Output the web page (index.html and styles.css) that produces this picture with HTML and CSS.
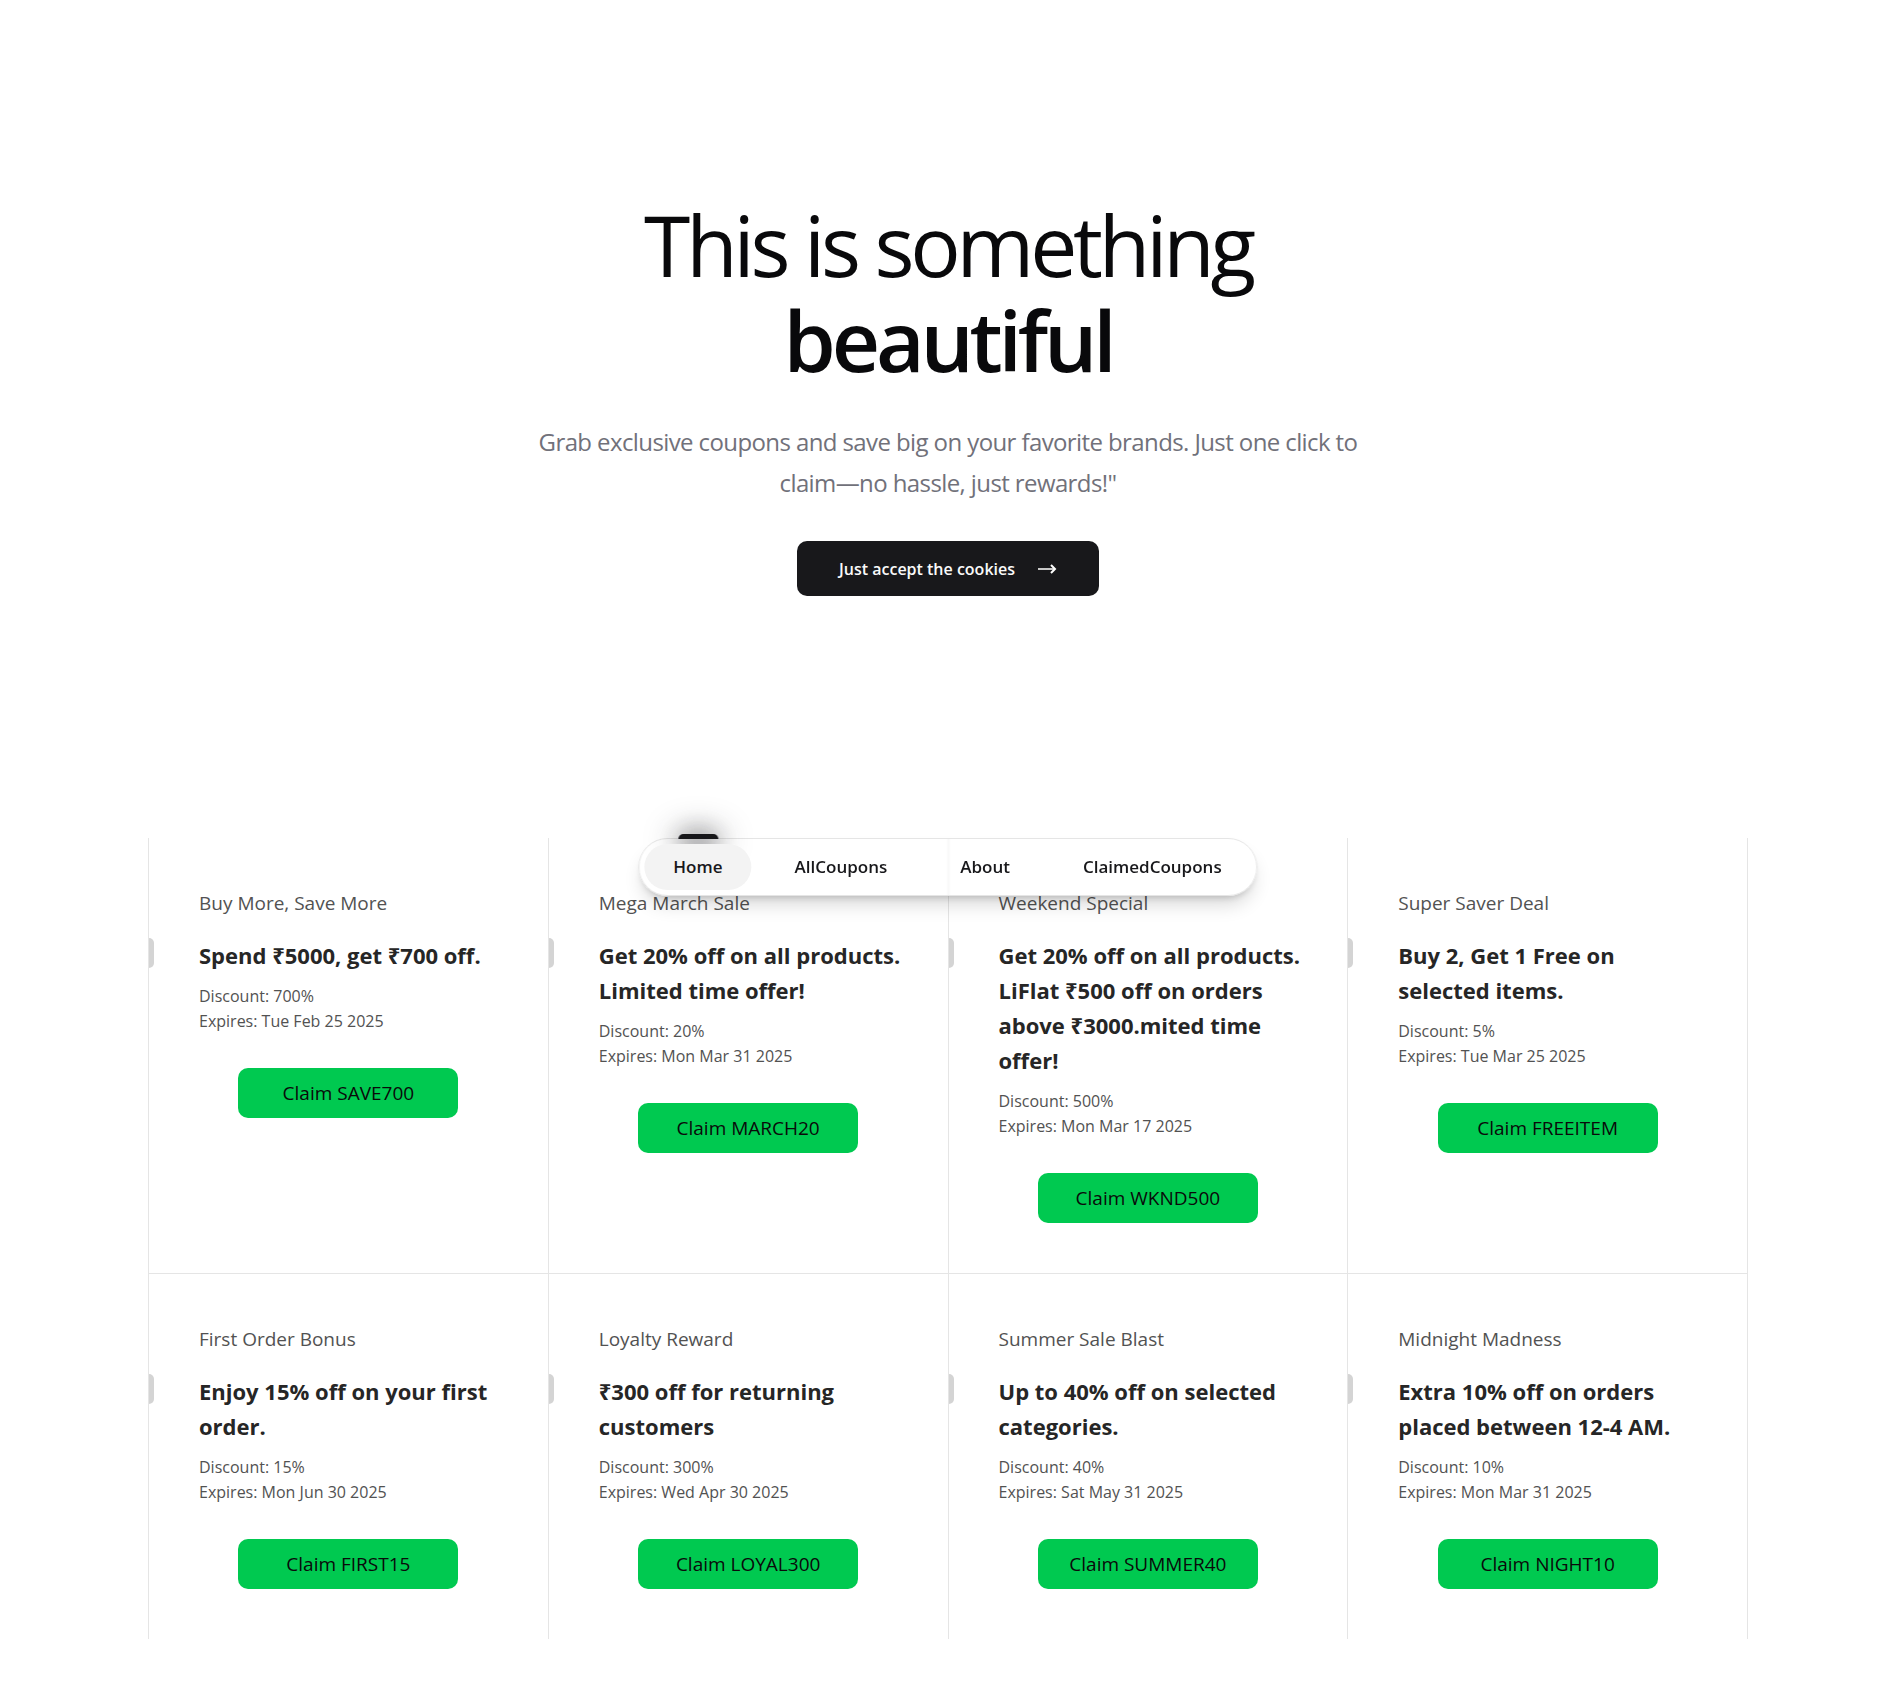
FILE: index.html
```html
<!DOCTYPE html>
<html lang="en">
<head>
<meta charset="utf-8">
<meta name="viewport" content="width=device-width, initial-scale=1">
<title>Coupons</title>
<link rel="stylesheet" href="styles.css">
</head>
<body>
<header class="hero">
  <h1 class="hero-title">This is something <strong>beautiful</strong></h1>
  <p class="hero-text">Grab exclusive coupons and save big on your favorite brands. Just one click to claim—no hassle, just rewards!"</p>
  <button class="hero-button" type="button">
    Just accept the cookies
    <svg width="20" height="20" viewBox="0 0 20 20" fill="none" aria-hidden="true"><path d="M1 10h17" stroke="#c8c8c8" stroke-width="2"/><path d="M14 6l4 4-4 4" stroke="#fff" stroke-width="2"/></svg>
  </button>
</header>
<main class="coupons">
  <nav class="navbar" aria-label="Main">
    <a class="nav-link active" href="#home"><span class="lamp"></span><span class="nav-label">Home</span></a>
    <a class="nav-link" href="#all">AllCoupons</a>
    <a class="nav-link" href="#about">About</a>
    <a class="nav-link" href="#claimed">ClaimedCoupons</a>
  </nav>
  <div class="grid">
    <article class="card">
      <p class="card-name">Buy More, Save More</p>
      <h2 class="card-title">Spend ₹5000, get ₹700 off.</h2>
      <p class="card-meta">Discount: 700%<br>Expires: Tue Feb 25 2025</p>
      <button class="claim" type="button">Claim SAVE700</button>
    </article>
    <article class="card">
      <p class="card-name">Mega March Sale</p>
      <h2 class="card-title">Get 20% off on all products. Limited time offer!</h2>
      <p class="card-meta">Discount: 20%<br>Expires: Mon Mar 31 2025</p>
      <button class="claim" type="button">Claim MARCH20</button>
    </article>
    <article class="card">
      <p class="card-name">Weekend Special</p>
      <h2 class="card-title">Get 20% off on all products. LiFlat ₹500 off on orders above ₹3000.mited time offer!</h2>
      <p class="card-meta">Discount: 500%<br>Expires: Mon Mar 17 2025</p>
      <button class="claim" type="button">Claim WKND500</button>
    </article>
    <article class="card">
      <p class="card-name">Super Saver Deal</p>
      <h2 class="card-title">Buy 2, Get 1 Free on selected items.</h2>
      <p class="card-meta">Discount: 5%<br>Expires: Tue Mar 25 2025</p>
      <button class="claim" type="button">Claim FREEITEM</button>
    </article>
    <article class="card">
      <p class="card-name">First Order Bonus</p>
      <h2 class="card-title">Enjoy 15% off on your first order.</h2>
      <p class="card-meta">Discount: 15%<br>Expires: Mon Jun 30 2025</p>
      <button class="claim" type="button">Claim FIRST15</button>
    </article>
    <article class="card">
      <p class="card-name">Loyalty Reward</p>
      <h2 class="card-title">₹300 off for returning customers</h2>
      <p class="card-meta">Discount: 300%<br>Expires: Wed Apr 30 2025</p>
      <button class="claim" type="button">Claim LOYAL300</button>
    </article>
    <article class="card">
      <p class="card-name">Summer Sale Blast</p>
      <h2 class="card-title">Up to 40% off on selected categories.</h2>
      <p class="card-meta">Discount: 40%<br>Expires: Sat May 31 2025</p>
      <button class="claim" type="button">Claim SUMMER40</button>
    </article>
    <article class="card">
      <p class="card-name">Midnight Madness</p>
      <h2 class="card-title">Extra 10% off on orders placed between 12-4 AM.</h2>
      <p class="card-meta">Discount: 10%<br>Expires: Mon Mar 31 2025</p>
      <button class="claim" type="button">Claim NIGHT10</button>
    </article>
  </div>
</main>
</body>
</html>
```
FILE: styles.css
```css
* {
  box-sizing: border-box;
}

body {
  margin: 0;
  padding: 0 0 44px 12px;
  background: #fff;
  color: #0a0a0a;
  font-family: "Open Sans", "Noto Sans", sans-serif;
}

h1, h2, p {
  margin: 0;
}

button {
  border: 0;
  font-family: inherit;
  cursor: pointer;
}

/* Hero */
.hero {
  display: flex;
  flex-direction: column;
  align-items: center;
  padding: 197px 24px 242px;
  text-align: center;
}

.hero-title {
  max-width: 840px;
  margin-bottom: 34px;
  color: #09090b;
  font-size: 84px;
  font-weight: 400;
  line-height: 95px;
  letter-spacing: -0.05em;
}

.hero-title strong {
  display: block;
  font-weight: 600;
}

.hero-text {
  max-width: 840px;
  margin-bottom: 38px;
  color: #71717a;
  font-size: 24px;
  line-height: 41px;
  letter-spacing: -0.025em;
}

.hero-button {
  display: flex;
  align-items: center;
  gap: 22px;
  height: 55px;
  padding: 0 42px;
  border-radius: 10px;
  background: #18181b;
  color: #fafafa;
  font-size: 16px;
  font-weight: 600;
}

/* Coupon list */
.coupons {
  position: relative;
}

.grid {
  display: grid;
  grid-template-columns: repeat(4, 1fr);
  max-width: 1600px;
  margin: 0 auto;
  border-left: 1px solid #e5e5e5;
}

.card {
  display: flex;
  flex-direction: column;
  align-items: flex-start;
  padding: 50px 46px;
  border-right: 1px solid #e5e5e5;
}

.card:nth-child(-n+4) {
  border-bottom: 1px solid #e5e5e5;
}

.card-name {
  margin-bottom: 20px;
  padding-left: 4px;
  color: #525252;
  font-size: 19px;
  line-height: 30px;
}

.card-title {
  position: relative;
  margin-bottom: 11px;
  padding-left: 4px;
  color: #262626;
  font-size: 22px;
  font-weight: 700;
  line-height: 35px;
}

.card-title::before {
  content: "";
  position: absolute;
  top: 0;
  left: -46px;
  width: 5px;
  height: 30px;
  border-radius: 0 5px 5px 0;
  background: #d4d4d4;
}

.card-meta {
  margin-bottom: 34px;
  padding-left: 4px;
  color: #525252;
  font-size: 16px;
  line-height: 25px;
}

.claim {
  align-self: center;
  width: 220px;
  height: 50px;
  border-radius: 10px;
  background: #00c950;
  color: #0a0a0a;
  font-size: 19px;
}

/* Floating navigation */
.navbar {
  position: absolute;
  z-index: 10;
  top: 0;
  left: 50%;
  display: flex;
  gap: 13px;
  padding: 5px;
  border: 1px solid #e5e5e5;
  border-radius: 29px;
  background: rgba(255, 255, 255, 0.4);
  backdrop-filter: blur(1px);
  box-shadow: 0 12px 19px -4px rgba(0, 0, 0, 0.16), 0 5px 8px -5px rgba(0, 0, 0, 0.24);
  transform: translateX(-50%);
}

.nav-link {
  position: relative;
  padding: 0 30px;
  border-radius: 23px;
  color: #18181b;
  font-size: 17px;
  font-weight: 600;
  line-height: 46px;
  text-decoration: none;
}

.nav-link.active {
  padding: 0;
}

.nav-label {
  position: relative;
  display: block;
  padding: 0 29px;
  border-radius: 23px;
  background: #f3f3f3;
}

.lamp {
  position: absolute;
  top: -10px;
  left: 50%;
  width: 40px;
  height: 5px;
  border-radius: 5px 5px 0 0;
  background: #18181b;
  transform: translateX(-50%);
}

.lamp::before,
.lamp::after {
  content: "";
  position: absolute;
  border-radius: 50%;
  background: rgba(24, 24, 27, 0.22);
}

.lamp::before {
  top: -10px;
  left: -10px;
  width: 60px;
  height: 30px;
  filter: blur(14px);
}

.lamp::after {
  top: -5px;
  left: 0;
  width: 40px;
  height: 30px;
  filter: blur(10px);
}
```
